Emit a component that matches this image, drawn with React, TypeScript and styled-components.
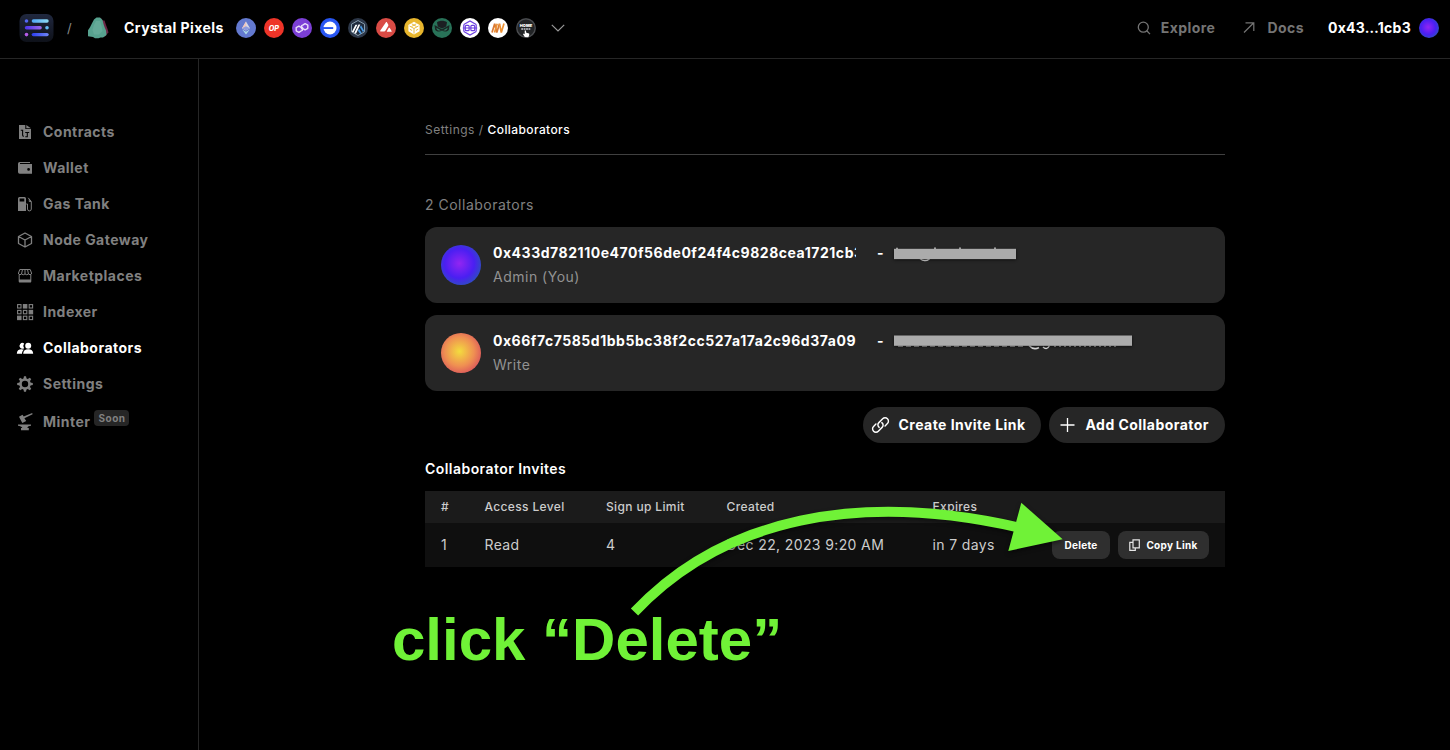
import React from "react";
import styled, { createGlobalStyle } from "styled-components";

const GlobalStyle = createGlobalStyle`
  * { box-sizing: border-box; }
  html, body { margin: 0; background: #000; }
  body {
    font-family: Inter, "Liberation Sans", sans-serif;
    font-size: 14px;
    line-height: 20px;
    letter-spacing: 0.5px;
    color: #fff;
    overflow: hidden;
  }
  svg { display: block; flex: none; }
`;

const Page = styled.div`
  position: relative;
  display: flex;
  flex-direction: column;
  width: 1450px;
  height: 750px;
  background: #000;
`;

const Header = styled.header`
  display: flex;
  justify-content: space-between;
  align-items: center;
  height: 59px;
  padding: 0 11px 3px 19px;
  border-bottom: 1px solid #262626;
`;

const HeaderGroup = styled.div`
  display: flex;
  align-items: center;
`;

const Slash = styled.span`
  margin: 0 15px 0 13px;
  width: 5px;
  font-size: 13px;
  color: #8a8a8a;
`;

const ProjectName = styled.span`
  width: 112px;
  margin-left: 15px;
  font-weight: 700;
  letter-spacing: 0.43px;
`;

const Chains = styled.div`
  display: flex;
  gap: 8px;
  margin-right: 15px;
`;

const HeaderLink = styled.a<{ $gap: number; $right: number }>`
  display: flex;
  align-items: center;
  gap: ${(p) => p.$gap}px;
  margin-right: ${(p) => p.$right}px;
  font-weight: 700;
  letter-spacing: 0.45px;
  color: #747474;
`;

const Account = styled.div`
  display: flex;
  align-items: center;
  justify-content: space-between;
  width: 111px;
  font-weight: 700;
  letter-spacing: 0.25px;
`;

const Avatar = styled.div<{ $size: number; $colors: string }>`
  flex: none;
  width: ${(p) => p.$size}px;
  height: ${(p) => p.$size}px;
  border-radius: 50%;
  background: radial-gradient(circle at 46% 46%, ${(p) => p.$colors});
`;

const Body = styled.div`
  display: flex;
  flex: 1;
`;

const Sidebar = styled.nav`
  display: flex;
  flex-direction: column;
  width: 199px;
  padding: 55px 0 0 16px;
  border-right: 1px solid #262626;
`;

const NavItem = styled.a<{ $active?: boolean }>`
  display: flex;
  align-items: center;
  gap: 9px;
  height: 36px;
  font-weight: 700;
  letter-spacing: 0.48px;
  color: ${(p) => (p.$active ? "#fff" : "#808080")};
`;

const MinterItem = styled(NavItem)`
  height: 40px;
`;

const SoonTag = styled.span`
  width: 35px;
  height: 16px;
  margin: -8px 0 0 -5px;
  border-radius: 4px;
  background: #262626;
  font-size: 10px;
  line-height: 16px;
  text-align: center;
`;

const Main = styled.main`
  display: flex;
  flex-direction: column;
  width: 800px;
  margin: 61px 0 0 226px;
`;

const Breadcrumb = styled.div`
  height: 35px;
  border-bottom: 1px solid #404040;
  font-size: 12px;
  color: #808080;
`;

const Current = styled.span`
  font-weight: 500;
  letter-spacing: 0.4px;
  color: #fff;
`;

const Count = styled.div`
  margin: 40px 0 12px;
  color: #808080;
`;

const Card = styled.section`
  display: flex;
  align-items: center;
  gap: 12px;
  height: 76px;
  margin-bottom: 12px;
  padding: 0 16px;
  border-radius: 12px;
  background: #262626;
`;

const CardText = styled.div`
  display: flex;
  flex-direction: column;
  gap: 4px;
`;

const CardLine = styled.div`
  display: flex;
  font-weight: 700;
`;

const Address = styled.span`
  width: 363px;
  margin-right: 21px;
  overflow: hidden;
  white-space: nowrap;
  letter-spacing: 0.53px;
`;

const Dash = styled.span`
  width: 17px;
`;

const Role = styled.div`
  color: #929292;
`;

const Actions = styled.div`
  display: flex;
  justify-content: flex-end;
  gap: 8px;
  margin-top: 4px;
`;

const PillButton = styled.button<{ $width: number }>`
  display: flex;
  align-items: center;
  gap: 8.5px;
  width: ${(p) => p.$width}px;
  height: 36px;
  padding: 0 0 0 8px;
  border: 0;
  border-radius: 18px;
  background: #262626;
  color: #fff;
  font: 700 14px/20px Inter, sans-serif;
  letter-spacing: 0.46px;
  white-space: nowrap;
`;

const SectionTitle = styled.h2`
  margin: 16px 0 12px;
  font-size: 14px;
  line-height: 20px;
  font-weight: 600;
  letter-spacing: 0.45px;
`;

const TableRow = styled.div<{ $head?: boolean }>`
  display: grid;
  grid-template-columns: 43.5px 121.5px 120.5px 206px 119.5px 58px 91px;
  align-items: center;
  height: ${(p) => (p.$head ? 32 : 44)}px;
  padding: 0 16px;
  background: ${(p) => (p.$head ? "#1b1b1b" : "#0f0f0f")};
  color: #cccccc;
  font-size: ${(p) => (p.$head ? 12 : 14)}px;
  font-weight: ${(p) => (p.$head ? 500 : 400)};
  letter-spacing: ${(p) => (p.$head ? 0.36 : 0.38)}px;
  white-space: nowrap;
`;

const SmallButton = styled.button<{ $width: number; $left?: number }>`
  display: flex;
  align-items: center;
  justify-content: center;
  gap: 6px;
  width: ${(p) => p.$width}px;
  height: 28px;
  margin-left: ${(p) => p.$left ?? 0}px;
  padding: 0;
  border: 0;
  border-radius: 8px;
  background: #2f2f2f;
  color: #fff;
  font: 700 10px/16px Inter, sans-serif;
  letter-spacing: 0.3px;
`;

const Annotation = styled.svg`
  position: absolute;
  left: 0;
  top: 0;
  pointer-events: none;
`;

const Caption = styled.div`
  position: absolute;
  left: 392px;
  top: 605px;
  font: 700 60px/70px "Liberation Sans", Arial, sans-serif;
  letter-spacing: 0;
  color: #70f237;
  white-space: nowrap;
`;

const violet = "#9225f2 0%, #4a1ff2 48%, #2a55b8 80%, #2a6a98 100%";
const sunset = "#f3dc3e 0%, #ef8f52 48%, #d9505c 80%, #a03a90 100%";

const Logo = () => (
  <svg width="35" height="28" viewBox="0 0 35 28">
    <defs>
      <linearGradient id="lg" x2="0" y2="1"><stop stopColor="#20283f" /><stop offset="1" stopColor="#0e1119" /></linearGradient>
      <linearGradient id="l1"><stop stopColor="#4fa7f5" /><stop offset="1" stopColor="#8fdcf2" /></linearGradient>
      <linearGradient id="l2"><stop stopColor="#4b34ee" /><stop offset="1" stopColor="#9c6ae8" /></linearGradient>
      <linearGradient id="l3"><stop stopColor="#2d3ff2" /><stop offset="1" stopColor="#6f86f5" /></linearGradient>
    </defs>
    <rect x=".5" width="34" height="28" rx="7" fill="url(#lg)" />
    <circle cx="7.5" cy="7" r="1.8" fill="#5468f3" />
    <rect x="12.7" y="5.3" width="17" height="3.4" rx="1.7" fill="url(#l1)" />
    <rect x="5.8" y="12.1" width="17" height="3.4" rx="1.7" fill="url(#l2)" />
    <circle cx="28" cy="13.8" r="1.8" fill="#64bdf3" />
    <circle cx="7.5" cy="20.6" r="1.8" fill="#b55be8" />
    <rect x="12.7" y="18.9" width="17" height="3.4" rx="1.7" fill="url(#l3)" />
  </svg>
);

const Crystal = () => (
  <svg width="22" height="22" viewBox="0 0 22 22">
    <path d="M12 1.500h2.500l1 2h2l1.500 4.500 1.500 4 1 3.500-2 2-1.500 2h-3z" fill="#6b2746" />
    <path d="M9.500.5H13l2.500 2.500 1 4 1 3 1.500 3.500.5 4.500-3.500 2.500h-2.500l-2 .8H8l-2-1.300-5-.7v-6l2-3 2-4L7 2.500z" fill="#57a28f" />
    <path d="M9 4h4l1.500 5 1 5-3.500 3.500H7L5.500 13 7 8z" fill="#65ab99" />
  </svg>
);

const chainMarks: { bg: string; mark: React.ReactNode }[] = [
  {
    bg: "#6379cf",
    mark: (
      <>
        <path d="M10 3.5 14 10.3 10 12.6 6 10.3z" fill="#d7d8e4" />
        <path d="M10 3.5v9.1L6 10.3z" fill="#f0c6bd" />
        <path d="m10 8.3 4 2-4 2.3-4-2.3z" fill="#8d9ce0" />
        <path d="m6.2 11.6 3.8 2.2 3.8-2.2L10 16.6z" fill="#b0dce6" />
      </>
    ),
  },
  {
    bg: "#ee3428",
    mark: <text x="9.800" y="12.700" textAnchor="middle" fontSize="7.200" fontWeight="800" fontStyle="italic" fill="#fff" letterSpacing="0">OP</text>,
  },
  {
    bg: "#7c3fd6",
    mark: (
      <g fill="none" stroke="#e9ddfa" strokeWidth="1.400" strokeLinejoin="round">
        <path d="m9.300 12.900-2.400 1.400-2.700-1.500V9.700l2.700-1.500 2.600 1.500v1.600" />
        <path d="M10.700 7.100l2.400-1.400 2.700 1.500v3.100l-2.700 1.500-2.600-1.500V8.700" />
        <path d="m9.300 12.900 1.200-.8v-2M10.700 7.100l-1.200.8v2" />
      </g>
    ),
  },
  {
    bg: "#2856f2",
    mark: (
      <>
        <circle cx="10" cy="10" r="6.500" fill="#fff" />
        <path d="M3 9.100h10.200v1.900H3z" fill="#2856f2" />
      </>
    ),
  },
  {
    bg: "#2c3748",
    mark: (
      <>
        <path d="m10 2.500 6.500 3.700v7.600L10 17.500l-6.500-3.700V6.200z" fill="#1f2b3d" stroke="#93aabb" strokeWidth=".9" />
        <path d="m6.200 15.200 4.300-8.600h1.800L8 15.800zM3.900 13.700l3.600-7h1.900L5.500 14.600z" fill="#fff" />
        <path d="m12 9.300 1-2 3.200 5.800-1.300 1zM10 12.700l1-2 2.700 4.300-1.500.9z" fill="#4a9be5" />
      </>
    ),
  },
  {
    bg: "#d94b45",
    mark: (
      <>
        <path d="M9.800 4.500c.4-.6.9-.6 1.200 0l1.200 2c.3.5.2 1 0 1.400l-3 5.200c-.2.3-.5.5-1 .5H4.900c-.7 0-.9-.5-.6-1z" fill="#fff" />
        <path d="M12.700 10.100c.3-.5.8-.5 1.100 0l1.800 2.800c.3.400.1.800-.5.8h-3.600c-.6 0-.8-.4-.5-.8z" fill="#fff" />
      </>
    ),
  },
  {
    bg: "#e8b62d",
    mark: (
      <>
        <path d="m10 3.800 5.600 3.100v6.300L10 16.400l-5.600-3.200V6.900z" fill="#fff" />
        <path d="M5.500 8 10 10.500 14.500 8M10 10.500v5.200M7.700 5.800l4.800 2.700M12.300 5.800 7.500 8.500M5.800 11.200l2.300 1.300M14.200 11.200l-2.300 1.300" fill="none" stroke="#e8b62d" strokeWidth=".9" />
      </>
    ),
  },
  {
    bg: "#287258",
    mark: (
      <>
        <path d="M5 4.300C7.500 2.300 12.500 2.300 15 4.300l-.8 4.200L10 10.500 5.800 8.500z" fill="#1c1f22" />
        <path d="m2.500 7 7.500 4.300L17.500 7l-.6 4.500c-1.200 2.400-4.700 2.700-6.900 1-2.200 1.700-5.700 1.400-6.900-1z" fill="#1a2523" />
        <path d="m4.300 9.700 4.500 2.500c-1.900.8-4 .1-4.500-2.500zm11.400 0-4.500 2.500c1.900.8 4 .1 4.500-2.500z" fill="#2f7a60" />
      </>
    ),
  },
  {
    bg: "#ffffff",
    mark: (
      <g fill="none" stroke="#6c3fe0" strokeWidth="1.200">
        <path d="M3.800 6.500 10 3l6.200 3.500M3.800 13.500 10 17l6.200-3.500M2.800 10h14.400" />
        <path d="M3.800 6.500v7M16.200 6.500v7" />
        <rect x="5.300" y="7.300" width="3.800" height="5.400" rx="1" />
        <rect x="10.900" y="7.300" width="3.800" height="5.400" rx="1" />
      </g>
    ),
  },
  {
    bg: "#ffffff",
    mark: (
      <g fill="none" strokeWidth="1.700">
        <path d="m4 14.500 2.700-8.800M8.800 14.500l2.700-8.800M6.700 5.700l2.100 8.800" stroke="#d97a35" />
        <path d="m6.500 14.500 2.700-8.800M11.500 5.700l1.800 8.800L16 5.500" stroke="#ee9234" />
      </g>
    ),
  },
  {
    bg: "#222426",
    mark: (
      <>
        <circle cx="10" cy="10" r="9.200" fill="none" stroke="#4b4d50" strokeWidth="1.200" />
        <text x="10" y="8.800" textAnchor="middle" fontSize="4" fontWeight="900" fill="#fff" letterSpacing="0">HOME</text>
        <path d="M5.300 11h9" stroke="#c4c8cf" strokeWidth="1.600" strokeDasharray="1.800 .6" />
        <path d="M8.800 19 7 16.200l.7-.6 1 .7v-3.800l1.200-.1.400 2.400 2.800.6.200 1.700-1 2.200z" fill="#fff" />
      </>
    ),
  },
];

const ChainIcon = ({ bg, children }: { bg: string; children: React.ReactNode }) => (
  <svg width="20" height="20" viewBox="0 0 20 20">
    <circle cx="10" cy="10" r="10" fill={bg} />
    {children}
  </svg>
);

const NavIcon = ({ children }: { children: React.ReactNode }) => (
  <svg width="18" height="18" viewBox="0 0 18 18" fill="currentColor">{children}</svg>
);

const ContractIcon = () => (
  <NavIcon>
    <path d="M3 2h6.300v4H15v10H3z" />
    <path d="m10.300 2 4.600 3.300h-4.600z" />
    <path d="M4.800 7.300h2.400M6.600 7v5.500M9.300 13.700h2V9.500H9.200M11.300 9.500h1.900M6.500 12.500l1.200 1" fill="none" stroke="#000" strokeWidth="1.100" />
  </NavIcon>
);
const WalletIcon = () => (
  <NavIcon>
    <path fillRule="evenodd" d="M3.700 3H14v1H4v1h12v9.800H3.700A1.700 1.700 0 0 1 2 13.100V4.700A1.700 1.700 0 0 1 3.700 3zm8.900 6a1.400 1.400 0 1 0 0 2.800 1.400 1.400 0 0 0 0-2.800z" />
  </NavIcon>
);
const GasIcon = () => (
  <NavIcon>
    <path fillRule="evenodd" d="M3.500 2h5A1.500 1.500 0 0 1 10 3.500V16H2V3.500A1.500 1.500 0 0 1 3.500 2zm.1 1.500v3h4.700v-3z" />
    <path d="M10.200 9h1.300v5a1.700 1.700 0 0 0 3.800 0V6.500L12.200 2.800M13.300 4v2.500h1.800" fill="none" stroke="currentColor" strokeWidth="1" />
  </NavIcon>
);
const CubeIcon = () => (
  <NavIcon>
    <path d="m9 2 6.500 3.500v7L9 16l-6.500-3.500v-7zM2.500 5.500 9 9l6.500-3.500M9 9v7" fill="none" stroke="currentColor" strokeWidth="1.300" strokeLinejoin="round" />
  </NavIcon>
);
const StoreIcon = () => (
  <NavIcon>
    <path d="M3.800 2.500h10.400L15.500 6v1q-1.500 1.500-3 0-1.700 1.500-3.500 0-1.700 1.500-3.500 0-1.500 1.500-3 0V6zM6.500 2.500 5.500 7M9 2.500V7M11.500 2.500l1 4.500M3.200 8v6.800h11.600V8" fill="none" stroke="currentColor" strokeWidth="1" />
    <path d="M3 12.500h12v2.800H3z" />
  </NavIcon>
);
const filledCells = [1, 5, 6];
const IndexerIcon = () => (
  <NavIcon>
    {Array.from({ length: 9 }, (_, i) => (
      <rect
        key={i}
        x={1.6 + (i % 3) * 5.8}
        y={1.6 + Math.floor(i / 3) * 5.8}
        width="3.400"
        height="3.400"
        fill={filledCells.includes(i) ? "currentColor" : "none"}
        stroke="currentColor"
        strokeWidth="1.100"
      />
    ))}
  </NavIcon>
);
const PeopleIcon = () => (
  <NavIcon>
    <path d="M8.100 4.500a2.900 2.900 0 1 0 0 4.700 4.200 4.200 0 0 1 0-4.700z" />
    <path d="M.8 14.800c0-3.200 2-4.600 4.700-4.600 1 0 1.800.2 2.400.5-1.300.9-1.900 2.200-1.900 4.100z" />
    <circle cx="12.200" cy="6.700" r="3" />
    <path d="M7.200 14.800c0-3.200 2-4.600 5-4.600s5 1.400 5 4.600z" />
  </NavIcon>
);
const GearIcon = () => (
  <NavIcon>
    <circle cx="9" cy="9" r="4.500" fill="none" stroke="currentColor" strokeWidth="2.600" />
    {[0, 45, 90, 135, 180, 225, 270, 315].map((a) => (
      <path key={a} d="M7.400 4 8 1.200h2L10.600 4z" transform={`rotate(${a} 9 9)`} />
    ))}
  </NavIcon>
);
const MinterIcon = () => (
  <NavIcon>
    <path d="m3 3.700 3.500-2 1.200 1.800L16.200 0l.4 1.300-8.200 4 1.800 2.800L6.300 10zM2 11.500h13v1.200c-2 0-3.300.7-3.700 2.300h1.500v2.300H5V15h1.300C5.800 13.500 4 12.900 2 12.700z" />
  </NavIcon>
);

const nav: [string, React.ComponentType][] = [
  ["Contracts", ContractIcon],
  ["Wallet", WalletIcon],
  ["Gas Tank", GasIcon],
  ["Node Gateway", CubeIcon],
  ["Marketplaces", StoreIcon],
  ["Indexer", IndexerIcon],
  ["Collaborators", PeopleIcon],
  ["Settings", GearIcon],
];

const SearchIcon = () => (
  <svg width="14" height="14" viewBox="0 0 14 14" fill="none" stroke="currentColor" strokeWidth="1.300">
    <circle cx="6.300" cy="6.200" r="5" />
    <path d="m9.800 9.800 3.200 3.300" />
  </svg>
);
const ArrowIcon = () => (
  <svg width="12" height="12" viewBox="0 0 12 12" fill="none" stroke="currentColor" strokeWidth="1.200">
    <path d="M1 10.500 10.800.8M2.500.8h8.300v8.300" />
  </svg>
);
const ChevronIcon = () => (
  <svg width="14" height="8" viewBox="0 0 14 8" fill="none" stroke="#999" strokeWidth="1.200">
    <path d="m.8.8 6.200 6.200L13.200.8" />
  </svg>
);
const LinkIcon = () => (
  <svg width="19" height="20" viewBox="0 0 20 20" fill="none" stroke="currentColor" strokeWidth="1.500" strokeLinecap="round">
    <path d="M8.600 12.500C6.800 11 6.900 8.900 8.300 7.500l4-4a3.500 3.500 0 0 1 5 0 3.500 3.500 0 0 1 0 5l-2.500 2.500" />
    <path d="M11.400 7.500c1.800 1.500 1.700 3.600.3 5l-4 4a3.500 3.500 0 0 1-5 0 3.500 3.500 0 0 1 0-5L5.200 9" />
  </svg>
);
const PlusIcon = () => (
  <svg width="20" height="20" viewBox="0 0 20 20" fill="none" stroke="currentColor" strokeWidth="1.300">
    <path d="M10.500 3v14M3.500 10h14" />
  </svg>
);
const CopyIcon = () => (
  <svg width="11" height="12" viewBox="0 0 11 12" fill="none" stroke="#e6e6e6" strokeWidth="1.200">
    <path d="M4 .8h6.300v8H4zM4 3.300H.8v8h5.500V8.800" />
  </svg>
);

/* Covered e-mail: only slivers of the glyphs show past the bar. */
const Redaction = ({ width, y, children }: { width: number; y: number; children: React.ReactNode }) => (
  <svg width={width} height="20" viewBox={`0 0 ${width} 20`} overflow="visible">
    <g fill="none" stroke="#e2e2e2" strokeWidth="1.500">{children}</g>
    <rect y={y} width={width} height="10.300" fill="#ababab" style={{ filter: "drop-shadow(0 1px 1.500px rgba(0,0,0,.6))" }} />
  </svg>
);

export default function App() {
  return (
    <>
      <GlobalStyle />
      <Page>
        <Header>
          <HeaderGroup>
            <Logo />
            <Slash>/</Slash>
            <Crystal />
            <ProjectName>Crystal Pixels</ProjectName>
            <Chains>
              {chainMarks.map((c, i) => (
                <ChainIcon key={i} bg={c.bg}>{c.mark}</ChainIcon>
              ))}
            </Chains>
            <ChevronIcon />
          </HeaderGroup>
          <HeaderGroup>
            <HeaderLink $gap={10} $right={28}><SearchIcon />Explore</HeaderLink>
            <HeaderLink $gap={12} $right={24}><ArrowIcon />Docs</HeaderLink>
            <Account>0x43…1cb3<Avatar $size={20} $colors={violet} /></Account>
          </HeaderGroup>
        </Header>
        <Body>
          <Sidebar>
            {nav.map(([label, Icon]) => (
              <NavItem key={label} $active={label === "Collaborators"}>
                <Icon />
                {label}
              </NavItem>
            ))}
            <MinterItem>
              <MinterIcon />
              <span>Minter</span>
              <SoonTag>Soon</SoonTag>
            </MinterItem>
          </Sidebar>
          <Main>
            <Breadcrumb>Settings / <Current>Collaborators</Current></Breadcrumb>
            <Count>2 Collaborators</Count>
            <Card>
              <Avatar $size={40} $colors={violet} />
              <CardText>
                <CardLine>
                  <Address>0x433d782110e470f56de0f24f4c9828cea1721cb3</Address>
                  <Dash>-</Dash>
                  <Redaction width={122} y={5.8}>
                    <path d="M3 4.800v3M41 4.500v3M66 4.500v3M101 4.500v3" />
                    <path d="M26 15.500q4.500 4 9.500.3" />
                  </Redaction>
                </CardLine>
                <Role>Admin (You)</Role>
              </CardText>
            </Card>
            <Card>
              <Avatar $size={40} $colors={sunset} />
              <CardText>
                <CardLine>
                  <Address>0x66f7c7585d1bb5bc38f2cc527a17a2c96d37a09</Address>
                  <Dash>-</Dash>
                  <Redaction width={238} y={4.5}>
                    <path d="M4 15.100h128" strokeDasharray="5 3" strokeWidth="1" />
                    <path d="M135 14.500q4.500 5 10 2M149 16q4 3.500 6.500-1.500" />
                    <path d="M160 15.100h62" strokeDasharray="2 3" strokeWidth="1" />
                  </Redaction>
                </CardLine>
                <Role>Write</Role>
              </CardText>
            </Card>
            <Actions>
              <PillButton $width={178}><LinkIcon />Create Invite Link</PillButton>
              <PillButton $width={176}><PlusIcon />Add Collaborator</PillButton>
            </Actions>
            <SectionTitle>Collaborator Invites</SectionTitle>
            <TableRow $head>
              <span>#</span>
              <span>Access Level</span>
              <span>Sign up Limit</span>
              <span>Created</span>
              <span>Expires</span>
            </TableRow>
            <TableRow>
              <span>1</span>
              <span>Read</span>
              <span>4</span>
              <span>Dec 22, 2023 9:20 AM</span>
              <span>in 7 days</span>
              <SmallButton $width={58}>Delete</SmallButton>
              <SmallButton $width={91} $left={8}><CopyIcon />Copy Link</SmallButton>
            </TableRow>
          </Main>
        </Body>
        <Annotation width="1450" height="750" viewBox="0 0 1450 750">
          <g style={{ filter: "drop-shadow(0 2px 2px rgba(0,0,0,.5))" }}>
            <path d="M634.500 612C724 517 860 491.500 1018 527.300" fill="none" stroke="#70f237" strokeWidth="10" />
            <path d="M1021.300 502.700 1062.700 539.300 1008.300 551z" fill="#70f237" />
          </g>
        </Annotation>
        <Caption>click “Delete”</Caption>
      </Page>
    </>
  );
}
